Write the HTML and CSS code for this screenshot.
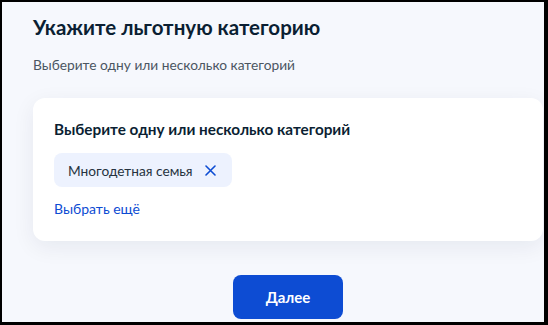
FILE: index.html
```html
<!DOCTYPE html>
<html lang="ru">
<head>
  <meta charset="UTF-8" />
  <meta name="viewport" content="width=device-width, initial-scale=1.0"/>
  <title>Льготная категория</title>
  <link rel="stylesheet" href="styles.css">
</head>
<body>
  <div class="frame">
    <div class="content">
      <h1>Укажите льготную категорию</h1>
      <p class="subtitle">Выберите одну или несколько категорий</p>

      <!-- Выбор категорий -->
      <div class="card">
        <h2>Выберите одну или несколько категорий</h2>
        <div class="chips">
          <span class="chip">
            Многодетная семья
            <svg class="chip-close" width="11" height="11" viewBox="0 0 11 11">
              <path d="M1 1L10 10M10 1L1 10" stroke="#0d4cd3" stroke-width="1.6" stroke-linecap="round" fill="none"/>
            </svg>
          </span>
        </div>
        <a class="more-link" href="#">Выбрать ещё</a>
      </div>

      <div class="actions">
        <button class="btn-primary">Далее</button>
      </div>
    </div>
  </div>
</body>
</html>
```

FILE: styles.css
```css
* {
  box-sizing: border-box;
  margin: 0;
  padding: 0;
}

body {
  font-family: Lato, "Liberation Sans", sans-serif;
  background: #000;
}

.frame {
  width: 548px;
  height: 325px;
  border-style: solid;
  border-color: #000;
  border-width: 2px 4px 3px 2px;
  background: #f6f8fd;
  overflow: hidden;
}

.content {
  width: 510px;
  margin-left: 31px;
  padding-top: 12px;
}

h1 {
  font-size: 20.5px;
  line-height: 26px;
  font-weight: 700;
  color: #0b1f33;
}

.subtitle {
  margin-top: 15px;
  font-size: 13.75px;
  line-height: 20px;
  color: #4b5662;
}

.card {
  margin-top: 23px;
  background: #fff;
  border-radius: 12px;
  padding: 19px 21px 22px;
  box-shadow: 0 6px 22px rgba(11, 31, 51, 0.07);
}

h2 {
  font-size: 15.3px;
  line-height: 24px;
  font-weight: 700;
  color: #0b1f33;
}

.chips {
  display: flex;
  margin-top: 12px;
}

.chip {
  display: flex;
  align-items: center;
  gap: 12px;
  height: 34px;
  padding: 0 16px 0 14px;
  background: #edf2fe;
  border-radius: 8px;
  font-size: 13.7px;
  color: #26333f;
}

.more-link {
  display: block;
  margin-top: 12px;
  font-size: 14px;
  line-height: 20px;
  color: #0d4cd3;
  text-decoration: none;
}

.actions {
  display: flex;
  justify-content: center;
  margin-top: 34px;
}

.btn-primary {
  width: 110px;
  height: 44px;
  border: none;
  border-radius: 8px;
  background: #0d4cd3;
  color: #fff;
  font-family: inherit;
  font-size: 15px;
  font-weight: 700;
}
```
